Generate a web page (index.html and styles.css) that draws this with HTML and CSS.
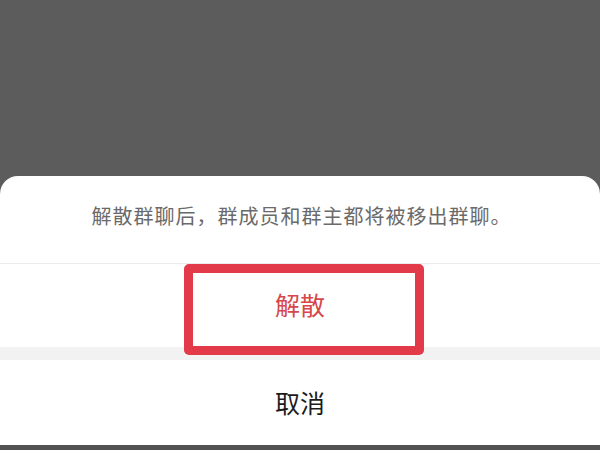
FILE: index.html
```html
<!DOCTYPE html>
<html lang="zh-CN">
<head>
<meta charset="utf-8">
<title>解散群聊</title>
<link rel="stylesheet" href="styles.css">
</head>
<body>
<div class="screen">
  <div class="backdrop"></div>
  <div class="sheet">
    <div class="message">解散群聊后，群成员和群主都将被移出群聊。</div>
    <div class="action action-danger">
      <span>解散</span>
      <div class="highlight"></div>
    </div>
    <div class="gap"></div>
    <div class="action action-cancel"><span>取消</span></div>
  </div>
  <div class="bottom-bar"></div>
</div>
</body>
</html>
```
FILE: styles.css
```css
html, body {
  margin: 0;
  padding: 0;
}
body {
  width: 600px;
  height: 450px;
  overflow: hidden;
  background: #5c5c5c;
  font-family: "Noto Sans CJK SC", "Noto Sans", sans-serif;
}
.screen {
  display: flex;
  flex-direction: column;
  height: 450px;
}
.backdrop {
  height: 176px;
  flex: none;
  background: #5c5c5c;
}
.sheet {
  flex: none;
  background: #ffffff;
  border-radius: 18px 18px 0 0;
  display: flex;
  flex-direction: column;
}
.message {
  height: 88px;
  box-sizing: border-box;
  padding-bottom: 8px;
  padding-left: 3px;
  display: flex;
  align-items: center;
  justify-content: center;
  font-size: 20px;
  letter-spacing: 1px;
  color: #6a6a6a;
  border-bottom: 1px solid #ececec;
}
.action {
  position: relative;
  display: flex;
  align-items: center;
  justify-content: center;
  font-size: 25px;
}
.action-danger {
  height: 83px;
  color: #d5474b;
  padding-bottom: 4px;
  box-sizing: border-box;
}
.highlight {
  position: absolute;
  left: 184px;
  top: 0;
  width: 240px;
  height: 91px;
  box-sizing: border-box;
  border: 9px solid #e23a48;
  border-radius: 5px;
  z-index: 2;
}
.gap {
  height: 13px;
  background: #f2f2f2;
}
.action-cancel {
  height: 85px;
  color: #1c1c1c;
  padding-bottom: 2px;
  box-sizing: border-box;
}
.bottom-bar {
  flex: 1;
  background: #525252;
}
```
